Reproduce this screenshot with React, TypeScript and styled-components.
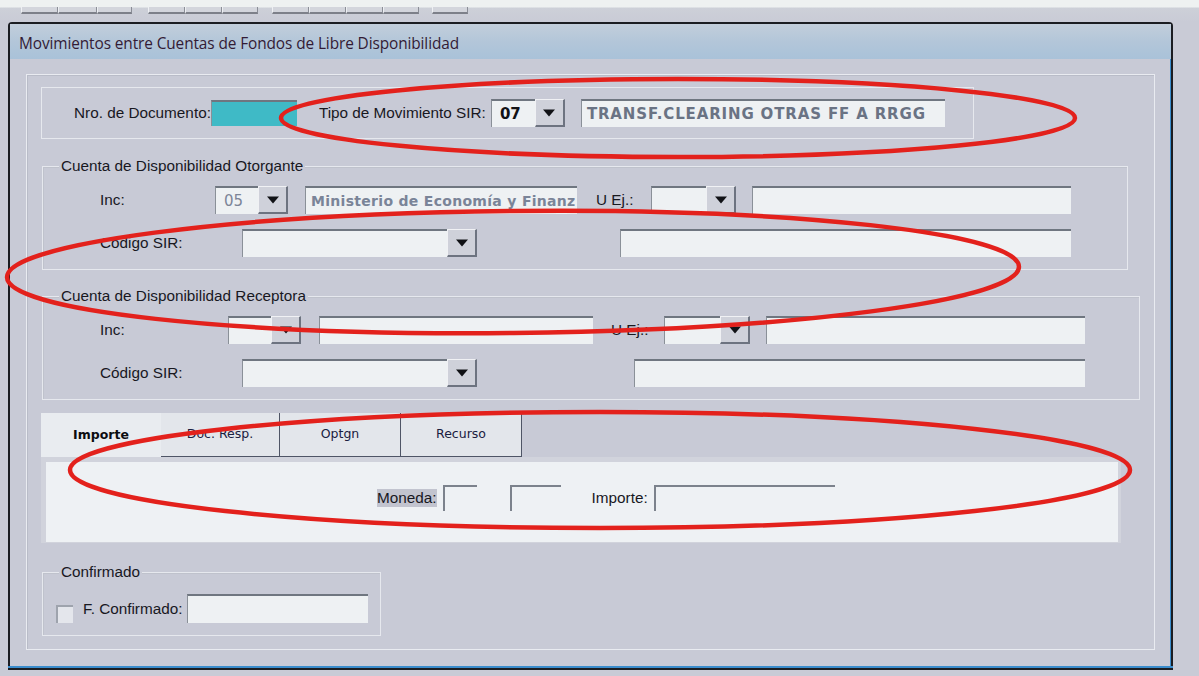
import React from 'react'
import styled, { createGlobalStyle } from 'styled-components'

const GlobalStyle = createGlobalStyle`
	html, body {
		margin: 0;
		padding: 0;
		background: #c9cbd6;
	}
	body {
		font-family: "Liberation Sans", Arial, sans-serif;
		color: #1c1c26;
	}
`

const Page = styled.div`
	position: relative;
	width: 1199px;
	height: 676px;
	overflow: hidden;
	background: #c9cbd6;
`

/* ---- toolbar strip behind the dialog ---- */

const Toolbar = styled.div`
	display: flex;
	align-items: flex-start;
	gap: 14px;
	height: 22px;
	padding: 7px 0 0 21px;
	box-sizing: border-box;
	background: linear-gradient(to bottom, #eef1f1 0px, #eef1f1 7px, #cdd0d8 8px, #c9cbd6 22px);
`

const ToolGroup = styled.div<{ $ml?: number }>`
	display: flex;
	height: 7px;
	margin-left: ${p => p.$ml || 0}px;
`

const ToolButton = styled.div<{ $w?: number }>`
	width: ${p => p.$w || 37}px;
	height: 7px;
	box-sizing: border-box;
	background: #d3d5dc;
	border-right: 1px solid #8a8d96;
	border-bottom: 2px solid #7d8089;
	border-left: 1px solid #eef0f3;
`

/* ---- dialog window ---- */

const Window = styled.div`
	margin-left: 8px;
	width: 1165px;
	height: 644px;
	box-sizing: border-box;
	border: 2px solid #1b1d22;
	border-bottom: none;
	border-radius: 4px 4px 0 0;
	box-shadow: inset -1px 0 0 #3a8ccc, 0 2px 0 #3a8ccc, 0 4px 0 #1b1d22;
	background: #c8cad6;
	display: flex;
	flex-direction: column;
`

const TitleBar = styled.div`
	height: 35px;
	display: flex;
	align-items: center;
	padding: 4px 0 0 9px;
	box-sizing: border-box;
	background: linear-gradient(to bottom, #c2cedb 0%, #b3c6d9 50%, #a9c2d9 100%);
	font-family: "Open Sans", "Liberation Sans", sans-serif;
	font-size: 15.4px;
	letter-spacing: -0.1px;
	color: #331b35;
`

const Body = styled.div`
	flex: 1;
	padding: 15px 16px 16px 16px;
	box-sizing: border-box;
	display: flex;
`

const OuterFrame = styled.div`
	flex: 1;
	border: 1px solid #e9ebf1;
	box-shadow: inset 1px 1px 0 #b9bcc8;
	padding: 12px 0 0 14px;
	display: flex;
	flex-direction: column;
	align-items: flex-start;
`

/* ---- etched group boxes ---- */

const HeaderBox = styled.div`
	width: 933px;
	height: 52px;
	box-sizing: border-box;
	border: 1px solid #e6e8ee;
	display: flex;
	align-items: center;
	padding-left: 32px;
`

const Group = styled.div<{ $w: number; $mt: number }>`
	width: ${p => p.$w}px;
	margin-top: ${p => p.$mt}px;
	box-sizing: border-box;
	border: 1px solid #e6e8ee;
	box-shadow: inset 1px 1px 0 #bfc2cc;
	padding-bottom: 12px;
	margin-left: 1px;
`

const Caption = styled.div`
	width: fit-content;
	margin: -9px 0 0 16px;
	padding: 0 2px;
	line-height: 16px;
	font-size: 15.3px;
	background: #c8cad6;
	color: #18181f;
`

const Row = styled.div<{ $mt: number; $pl?: number; $h?: number }>`
	display: flex;
	align-items: center;
	height: ${p => p.$h || 28}px;
	margin-top: ${p => p.$mt}px;
	padding-left: ${p => (p.$pl ?? 57)}px;
`

const Label = styled.span<{ $w?: number; $ml?: number; $shade?: boolean }>`
	flex: none;
	width: ${p => (p.$w ? `${p.$w}px` : 'auto')};
	margin-left: ${p => p.$ml || 0}px;
	font-size: 15.3px;
	white-space: nowrap;
	color: #18181f;
	background: ${p => (p.$shade ? '#c2c4cf' : 'transparent')};
`

/* sunken edit box */
const Field = styled.div<{ $w: number; $ml?: number; $h?: number; $tone?: 'cyan' | 'plain' }>`
	flex: none;
	width: ${p => p.$w}px;
	height: ${p => p.$h || 28}px;
	margin-left: ${p => p.$ml || 0}px;
	box-sizing: border-box;
	border-top: 2px solid #6f7680;
	border-left: 1px solid #8a9098;
	background: ${p => (p.$tone === 'cyan' ? '#3fbac6' : '#eef1f3')};
	display: flex;
	align-items: center;
	overflow: hidden;
	white-space: nowrap;
`

/* open edit box: only the sunken top/left edge is drawn */
const OpenField = styled(Field)`
	background: transparent;
	border-top: 2px solid #7c828c;
	border-left: 2px solid #7c828c;
`

const FieldText = styled.span<{ $bold?: boolean }>`
	padding-left: 5px;
	font-family: "DejaVu Sans", "Liberation Sans", sans-serif;
	font-size: ${p => (p.$bold ? 15 : 14)}px;
	font-weight: bold;
	letter-spacing: ${p => (p.$bold ? 0.85 : 0.3)}px;
	color: ${p => (p.$bold ? '#6a7384' : '#7a8498')};
`

const CodeText = styled.span<{ $dark?: boolean }>`
	padding-left: 8px;
	font-family: "DejaVu Sans", "Liberation Sans", sans-serif;
	font-size: 15px;
	font-weight: ${p => (p.$dark ? 'bold' : 'normal')};
	color: ${p => (p.$dark ? '#111216' : '#7c8598')};
`

const Combo = styled.div<{ $w: number; $ml?: number }>`
	flex: none;
	display: flex;
	width: ${p => p.$w}px;
	height: 28px;
	margin-left: ${p => p.$ml || 0}px;
`

const ComboBox = styled.div`
	flex: 1;
	box-sizing: border-box;
	border-top: 2px solid #6f7680;
	border-left: 1px solid #8a9098;
	background: #eef1f3;
	display: flex;
	align-items: center;
`

const ComboButton = styled.div`
	flex: none;
	width: 30px;
	box-sizing: border-box;
	background: #cfd1da;
	border-top: 1px solid #f0f1f4;
	border-left: 1px solid #f0f1f4;
	border-right: 2px solid #6d7380;
	border-bottom: 2px solid #6d7380;
	display: flex;
	align-items: center;
	justify-content: center;
`

const Arrow = () => (
	<svg width="14" height="8" viewBox="0 0 14 8">
		<path d="M1 0.5 L13 0.5 L7 7.5 Z" fill="#111216" />
	</svg>
)

const Dropdown: React.FC<{ w: number; ml?: number; children?: React.ReactNode }> = ({ w, ml, children }) => (
	<Combo $w={w} $ml={ml}>
		<ComboBox>{children}</ComboBox>
		<ComboButton>
			<Arrow />
		</ComboButton>
	</Combo>
)

/* ---- tab control ---- */

const Tabs = styled.div`
	margin-top: 13px;
	width: 1080px;
	display: flex;
	flex-direction: column;
`

const TabStrip = styled.div`
	display: flex;
	height: 44px;
`

const Tab = styled.div<{ $w: number; $active?: boolean }>`
	width: ${p => p.$w}px;
	box-sizing: border-box;
	display: flex;
	align-items: center;
	justify-content: center;
	padding-bottom: 2px;
	font-family: "DejaVu Sans", "Liberation Sans", sans-serif;
	font-size: 12.5px;
	font-weight: ${p => (p.$active ? 'bold' : 'normal')};
	color: ${p => (p.$active ? '#0c0c10' : '#1a2040')};
	background: ${p => (p.$active ? '#e9ecf0' : '#e3e6eb')};
	border-right: ${p => (p.$active ? 'none' : '1px solid #4f5566')};
	border-bottom: ${p => (p.$active ? 'none' : '1px solid #4f5566')};
`

const TabPanel = styled.div`
	height: 86px;
	box-sizing: border-box;
	border: 5px solid #d1d3dc;
	border-right-width: 3px;
	border-bottom-width: 1px;
	background: #eef1f4;
	display: flex;
	align-items: center;
	padding: 0 0 8px 331px;
`

/* ---- confirmation group ---- */

const CheckBox = styled.div`
	flex: none;
	width: 17px;
	height: 18px;
	box-sizing: border-box;
	border-top: 2px solid #9ea3ad;
	border-left: 2px solid #9ea3ad;
	background: #e4e6ec;
	margin: 10px 10px 0 0;
`

/* ---- hand-drawn markings over the form ---- */

const Markings = styled.svg`
	position: absolute;
	left: 0;
	top: 0;
	pointer-events: none;
`

const App = () => {
	return (
		<Page>
			<GlobalStyle />
			<Toolbar>
				<ToolGroup>
					<ToolButton />
					<ToolButton $w={39} />
					<ToolButton $w={35} />
				</ToolGroup>
				<ToolGroup $ml={2}>
					<ToolButton />
					<ToolButton />
					<ToolButton $w={36} />
				</ToolGroup>
				<ToolGroup>
					<ToolButton />
					<ToolButton />
					<ToolButton />
					<ToolButton $w={36} />
				</ToolGroup>
				<ToolGroup $ml={-1}>
					<ToolButton $w={36} />
				</ToolGroup>
			</Toolbar>

			<Window>
				<TitleBar>Movimientos entre Cuentas de Fondos de Libre Disponibilidad</TitleBar>
				<Body>
					<OuterFrame>
						<HeaderBox>
							<Label>Nro. de Documento:</Label>
							<Field $w={86} $h={26} $tone="cyan" />
							<Label $ml={22} $w={172}>Tipo de Movimiento SIR:</Label>
							<Dropdown w={74}>
								<CodeText $dark>07</CodeText>
							</Dropdown>
							<Field $w={364} $ml={16}>
								<FieldText $bold>TRANSF.CLEARING OTRAS FF A RRGG</FieldText>
							</Field>
						</HeaderBox>

						<Group $w={1086} $mt={27}>
							<Caption>Cuenta de Disponibilidad Otorgante</Caption>
							<Row $mt={12}>
								<Label $w={115}>Inc:</Label>
								<Dropdown w={73}>
									<CodeText>05</CodeText>
								</Dropdown>
								<Field $w={272} $ml={17}>
									<FieldText>Ministerio de Economía y Finanz</FieldText>
								</Field>
								<Label $ml={19} $w={55}>U Ej.:</Label>
								<Dropdown w={85} />
								<Field $w={319} $ml={16} />
							</Row>
							<Row $mt={15}>
								<Label $w={142}>Código SIR:</Label>
								<Dropdown w={235} />
								<Field $w={451} $ml={143} />
							</Row>
						</Group>

						<Group $w={1098} $mt={26}>
							<Caption>Cuenta de Disponibilidad Receptora</Caption>
							<Row $mt={12}>
								<Label $w={128}>Inc:</Label>
								<Dropdown w={73} />
								<Field $w={274} $ml={18} />
								<Label $ml={18} $w={53}>U Ej.:</Label>
								<Dropdown w={86} />
								<Field $w={319} $ml={16} />
							</Row>
							<Row $mt={15}>
								<Label $w={142}>Código SIR:</Label>
								<Dropdown w={235} />
								<Field $w={451} $ml={157} />
							</Row>
						</Group>

						<Tabs>
							<TabStrip>
								<Tab $w={120} $active>Importe</Tab>
								<Tab $w={119}>Doc. Resp.</Tab>
								<Tab $w={121}>Optgn</Tab>
								<Tab $w={121}>Recurso</Tab>
							</TabStrip>
							<TabPanel>
								<Label $shade>Moneda:</Label>
								<OpenField $w={34} $h={26} $ml={6} />
								<OpenField $w={51} $h={26} $ml={33} />
								<Label $ml={31}>Importe:</Label>
								<OpenField $w={181} $h={26} $ml={6} />
							</TabPanel>
						</Tabs>

						<Group $w={339} $mt={29}>
							<Caption>Confirmado</Caption>
							<Row $mt={14} $pl={13} $h={29}>
								<CheckBox />
								<Label $w={104}>F. Confirmado:</Label>
								<Field $w={181} $h={29} />
							</Row>
						</Group>
					</OuterFrame>
				</Body>
			</Window>

			<Markings width="1199" height="676" viewBox="0 0 1199 676">
				<g fill="none" stroke="#e3211c" strokeWidth="4.5">
					<ellipse cx="678" cy="118" rx="397" ry="39" />
					<ellipse cx="513" cy="272" rx="506" ry="61" transform="rotate(-0.6 513 272)" />
					<ellipse cx="600" cy="470" rx="530" ry="58" />
				</g>
			</Markings>
		</Page>
	)
}

export default App
